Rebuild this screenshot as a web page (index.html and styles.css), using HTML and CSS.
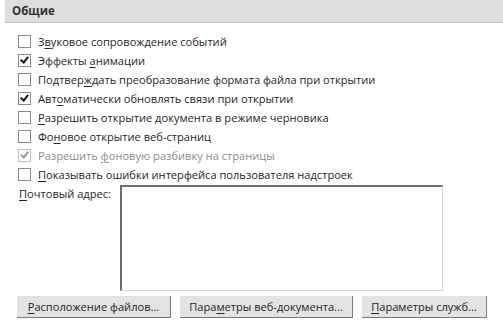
FILE: index.html
```html
<!DOCTYPE html>
<html>
<head>
    <title>Общие</title>
<link rel="stylesheet" href="styles.css">
</head>
<body>

    <div class="section-head">Общие</div>

    <div class="options">
        <label class="opt"><span class="box"></span><span>З<u>в</u>уковое сопровождение событий</span></label>
        <label class="opt"><span class="box checked"></span><span>Эффекты <u>а</u>нимации</span></label>
        <label class="opt"><span class="box"></span><span>Подтвер<u>ж</u>дать преобразование формата файла при открытии</span></label>
        <label class="opt"><span class="box checked"></span><span>Авт<u>о</u>матически обновлять связи при открытии</span></label>
        <label class="opt"><span class="box"></span><span><u>Р</u>азрешить открытие документа в режиме черновика</span></label>
        <label class="opt"><span class="box"></span><span>Фо<u>н</u>овое открытие веб-страниц</span></label>
        <label class="opt disabled"><span class="box checked"></span><span>Разрешить <u>ф</u>оновую разбивку на страницы</span></label>
        <label class="opt"><span class="box"></span><span><u>П</u>оказывать ошибки интерфейса пользователя надстроек</span></label>
    </div>

    <div class="mail">
        <span class="mail-label"><u>П</u>очтовый адрес:</span>
        <div class="mail-box"></div>
    </div>

    <div class="buttons">
        <button class="btn b1"><u>Р</u>асположение файлов...</button>
        <button class="btn b2">Пара<u>м</u>етры веб-документа...</button>
        <button class="btn b3"><u>П</u>араметры служб...</button>
    </div>

</body>
</html>
```

FILE: styles.css
```css
BODY {
    margin: 0;
    padding: 0;
    background: #fff;
    color: #262626;
    font: normal 11.1px/16px "Open Sans", "Noto Sans", sans-serif;
    width: 503px;
    height: 325px;
    overflow: hidden;
}
U {
    text-decoration: underline;
    text-underline-offset: 2px;
}
.section-head {
    margin-left: 5px;
    height: 22px;
    line-height: 21px;
    padding-left: 7px;
    background: #dedede;
    border-bottom: solid 1px #c6c6c6;
    font-weight: bold;
    font-size: 11.5px;
    color: #333;
}
.options {
    padding: 9px 0 0 18px;
}
.opt {
    display: flex;
    align-items: center;
    gap: 7px;
    height: 19px;
}
.opt.disabled {
    color: #8d8d8d;
}
.box {
    width: 11px;
    height: 11px;
    border: solid 1px #8a8a8a;
    background: #fff;
    position: relative;
    flex: none;
}
.box.checked::after {
    content: "";
    position: absolute;
    left: 3px;
    top: 0px;
    width: 3px;
    height: 6px;
    border: solid #111;
    border-width: 0 2px 2px 0;
    transform: rotate(40deg);
}
.disabled .box {
    border-color: #bdbdbd;
}
.disabled .box.checked::after {
    border-color: #9a9a9a;
}
.mail {
    display: flex;
    padding: 1px 0 0 19px;
}
.mail-label {
    width: 101px;
    line-height: 16px;
    padding-top: 1px;
}
.mail-box {
    width: 320px;
    height: 103px;
    border-style: solid;
    border-width: 2px 1px 1px 2px;
    border-color: #6e6e6e #d9d9d9 #d9d9d9 #6e6e6e;
}
.buttons {
    display: flex;
    gap: 9px;
    padding: 5px 0 0 17px;
}
.btn {
    height: 22px;
    padding: 0;
    background: #e3e3e3;
    border: none;
    border-right: solid 1px #7a7a7a;
    border-bottom: solid 1px #7a7a7a;
    color: #262626;
    font: inherit;
}
.b1 { width: 154px; }
.b2 { width: 173px; }
.b3 { width: 125px; }
```
